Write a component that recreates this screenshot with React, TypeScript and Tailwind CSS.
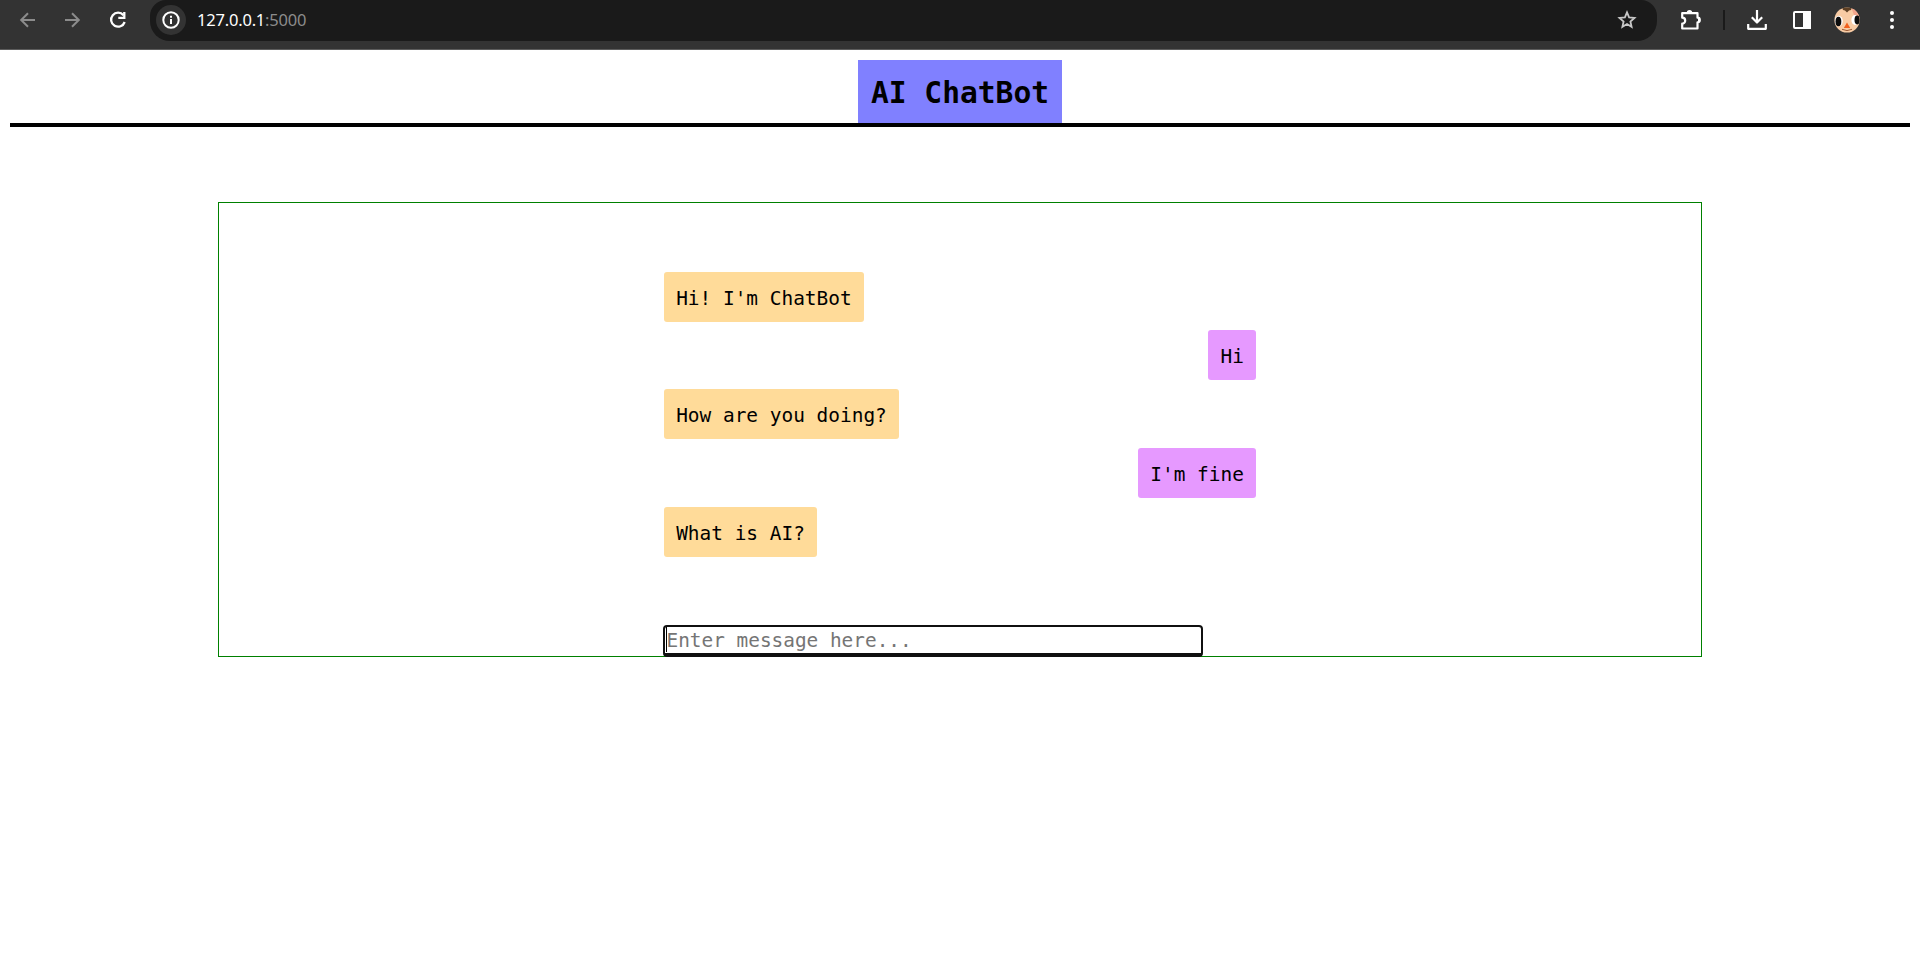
import type { ReactNode } from "react";

const mono = "font-['DejaVu_Sans_Mono','Liberation_Mono',monospace]";

function Icon({ children, className }: { children: ReactNode; className: string }) {
  return (
    <svg className={className} fill="none" stroke="currentColor" strokeWidth="2" viewBox="0 0 20 20">
      {children}
    </svg>
  );
}

function Avatar() {
  return (
    <svg className="ml-[22px] h-[26px] w-[26px]" viewBox="0 0 26 26">
      <defs>
        <clipPath id="face"><circle cx="13" cy="13" r="12.6" /></clipPath>
      </defs>
      <g clipPath="url(#face)">
        <rect width="26" height="26" fill="#f8cba4" />
        <path d="M17 0h9v12l-6-4z" fill="#f3a58c" />
        <path d="M8 0h10l-1 3-2 .5-2 2-2-2-2-.5z" fill="#5e4024" />
        <ellipse cx="4.8" cy="14" rx="4" ry="5.2" fill="#fff" />
        <ellipse cx="4.4" cy="14.5" rx="2.9" ry="4.8" fill="#0c0c0c" />
        <ellipse cx="21" cy="13" rx="3.6" ry="5" fill="#fff" />
        <ellipse cx="23.2" cy="13" rx="2.7" ry="4.4" fill="#0c0c0c" />
        <path d="M13 15.5l3.2 5.5H9.8z" fill="#f2601d" />
        <path d="M8 22.3q5 2.6 10 0" fill="none" stroke="#9a5b35" />
      </g>
    </svg>
  );
}

function Toolbar() {
  return (
    <header className="flex h-[50px] items-start border-b border-[#5c5c5c] bg-[#333333] text-white">
      <div className="flex h-10 w-[150px] shrink-0 items-center pl-[18px]">
        <Icon className="h-5 w-5 text-[#8c8c8c]"><path d="M17 10H3.5M10 3.2 3.2 10l6.8 6.8" /></Icon>
        <Icon className="ml-[25px] h-5 w-5 text-[#8c8c8c]"><path d="M2 10h13.5M9 3.2l6.8 6.8L9 16.8" /></Icon>
        <Icon className="ml-[25px] h-5 w-5">
          <path d="M15.5 5.2A7 7 0 1 0 16.7 12" strokeWidth="2.3" />
          <path d="M16.3 2v5.8h-6" strokeWidth="2.3" />
        </Icon>
      </div>
      <div className="flex h-[41px] w-[1507px] shrink-0 items-center rounded-b-[20px] rounded-t-[16px] bg-[#1a1a1a] pb-px pl-[6px] pr-[20px]">
        <div className="flex h-[30px] w-[30px] items-center justify-center rounded-full bg-[#333333]">
          <Icon className="h-5 w-5">
            <circle cx="10" cy="10" r="7.7" />
            <path d="M10 9v5M10 5.8v2" />
          </Icon>
        </div>
        <span className="ml-[11px] font-['Noto_Sans','Open_Sans',sans-serif] text-[16.5px] leading-5 tracking-[-0.2px]">
          127.0.0.1<span className="text-[#8c8c8c]">:5000</span>
        </span>
        <Icon className="ml-auto h-5 w-5 text-[#c7c7c7]">
          <path d="M10 2.4l2.1 5 5.4.5-4.1 3.6 1.2 5.3-4.6-2.8-4.6 2.8 1.2-5.3-4.1-3.6 5.4-.5z" strokeWidth="1.8" />
        </Icon>
      </div>
      <div className="flex h-10 flex-1 items-center pl-[23px]">
        <svg className="h-[22px] w-[22px]" fill="none" stroke="currentColor" strokeWidth="2.2" viewBox="0 0 22 22">
          <path d="M2.2 4.2h15.3v4.5a2.2 2.2 0 0 1 0 4.6v6.2H2.2v-4.8a3 3 0 0 0 0-6z" strokeLinejoin="round" />
          <path d="M6.8 3.6a2.7 2.7 0 0 1 5.4 0zM18 8.4a2.7 2.7 0 0 1 0 5.2z" fill="currentColor" stroke="none" />
        </svg>
        <span className="ml-[21px] h-5 w-[2px] bg-[#1a1a1a]" />
        <svg className="ml-[21px] h-[22px] w-[22px]" fill="none" stroke="currentColor" strokeWidth="2.2" viewBox="0 0 22 22">
          <path d="M11 1v12M5.8 8.3l5.2 5.2 5.2-5.2M2.2 15v4.8h17.6V15" strokeLinejoin="round" />
        </svg>
        <svg className="ml-6 h-5 w-5" fill="none" stroke="currentColor" strokeWidth="2" viewBox="0 0 20 20">
          <rect x="2" y="2" width="16" height="16" rx="1" />
          <path d="M12 2h6v16h-6z" fill="currentColor" />
        </svg>
        <Avatar />
        <svg className="ml-[22px] h-5 w-5" fill="currentColor" viewBox="0 0 20 20">
          <circle cx="10" cy="3" r="2" /><circle cx="10" cy="10" r="2" /><circle cx="10" cy="17" r="2" />
        </svg>
      </div>
    </header>
  );
}

const messages = [
  { from: "bot", text: "Hi! I'm ChatBot" },
  { from: "user", text: "Hi" },
  { from: "bot", text: "How are you doing?" },
  { from: "user", text: "I'm fine" },
  { from: "bot", text: "What is AI?" },
];

export default function App() {
  return (
    <div className={`h-[961px] overflow-hidden bg-white text-black ${mono}`}>
      <Toolbar />
      <div className="mx-[10px] mt-[10px] flex justify-center border-b-4 border-black">
        <h1 className="flex h-[63px] w-[204px] items-center justify-center bg-[#8080ff] pt-[3px] text-[29.6px] font-bold">
          <span className="whitespace-pre">AI ChatBot</span>
        </h1>
      </div>
      <main className="mx-auto mt-[75px] flex h-[455px] w-[1484px] flex-col items-center border border-[#008000]">
        <div className="mt-[68.7px] flex w-[592px] shrink-0 flex-col gap-[8.75px]">
          {messages.map((m) => (
            <p
              key={m.text}
              className={`flex h-[50px] items-center whitespace-pre rounded-[3px] px-[12.15px] pt-[3px] text-[19.46px] ${
                m.from === "bot" ? "self-start bg-[#ffdb99]" : "self-end bg-[#e699ff]"
              }`}
            >
              {m.text}
            </p>
          ))}
        </div>
        <div className="relative mt-[68.3px] flex w-[594px] shrink-0">
          <input
            autoFocus
            className="h-8 w-[540px] rounded-[4px] border-2 border-b-4 border-[#101010] bg-white pl-[1.5px] pt-[2px] text-[19.4px] caret-transparent outline-none placeholder:text-[#757575]"
            placeholder="Enter message here..."
          />
          <span className="absolute left-[3px] top-[2px] h-[25px] w-px bg-black" />
        </div>
      </main>
    </div>
  );
}
